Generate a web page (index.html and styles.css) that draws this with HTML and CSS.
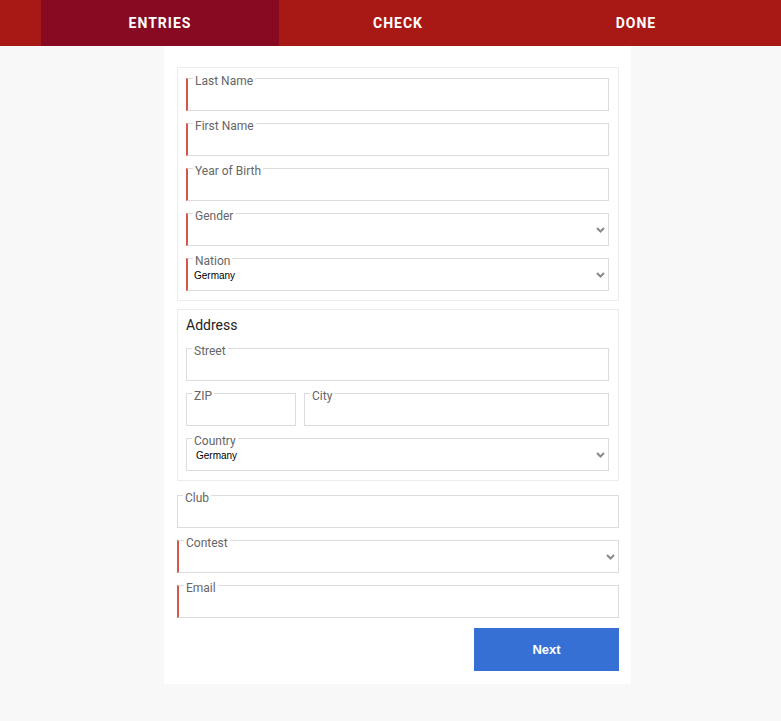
FILE: index.html
```html
<!DOCTYPE html>
<html lang="en">
<head>
<meta charset="utf-8">
<title>Entries</title>
<link rel="stylesheet" href="styles.css">
</head>
<body>
<header class="topbar">
  <nav class="tabs">
    <div class="tab active">ENTRIES</div>
    <div class="tab">CHECK</div>
    <div class="tab">DONE</div>
  </nav>
</header>
<main class="wrap">
  <form class="panel">
    <div class="group">
      <fieldset class="field req"><legend>Last Name</legend><input class="ctl" type="text"></fieldset>
      <fieldset class="field req"><legend>First Name</legend><input class="ctl" type="text"></fieldset>
      <fieldset class="field req"><legend>Year of Birth</legend><input class="ctl" type="text"></fieldset>
      <fieldset class="field req sel"><legend>Gender</legend><div class="ctl"></div><svg class="chev" width="9" height="6" viewBox="0 0 9 6"><path d="M1 1 L4.5 4.5 L8 1" fill="none" stroke="#8a8a8a" stroke-width="2"/></svg></fieldset>
      <fieldset class="field req sel"><legend>Nation</legend><div class="ctl">Germany</div><svg class="chev" width="9" height="6" viewBox="0 0 9 6"><path d="M1 1 L4.5 4.5 L8 1" fill="none" stroke="#8a8a8a" stroke-width="2"/></svg></fieldset>
    </div>
    <div class="group group2">
      <div class="group-title">Address</div>
      <fieldset class="field"><legend>Street</legend><input class="ctl" type="text"></fieldset>
      <div class="row">
        <fieldset class="field zip"><legend>ZIP</legend><input class="ctl" type="text"></fieldset>
        <fieldset class="field city"><legend>City</legend><input class="ctl" type="text"></fieldset>
      </div>
      <fieldset class="field sel"><legend>Country</legend><div class="ctl">Germany</div><svg class="chev" width="9" height="6" viewBox="0 0 9 6"><path d="M1 1 L4.5 4.5 L8 1" fill="none" stroke="#8a8a8a" stroke-width="2"/></svg></fieldset>
    </div>
    <div class="loose">
      <fieldset class="field"><legend>Club</legend><input class="ctl" type="text"></fieldset>
      <fieldset class="field req sel"><legend>Contest</legend><div class="ctl"></div><svg class="chev" width="9" height="6" viewBox="0 0 9 6"><path d="M1 1 L4.5 4.5 L8 1" fill="none" stroke="#8a8a8a" stroke-width="2"/></svg></fieldset>
      <fieldset class="field req"><legend>Email</legend><input class="ctl" type="text"></fieldset>
    </div>
    <div class="actions">
      <button type="button" class="next">Next</button>
    </div>
  </form>
</main>
</body>
</html>
```
FILE: styles.css
```css
html, body {
  margin: 0;
  padding: 0;
}
body {
  background: #f8f8f8;
  font-family: Roboto, "Noto Sans", sans-serif;
  min-height: 721px;
}
.topbar {
  background: #a81916;
  height: 46px;
}
.tabs {
  width: 714px;
  margin-left: 41px;
  display: grid;
  grid-template-columns: repeat(3, 1fr);
  height: 46px;
}
.tab {
  display: flex;
  align-items: center;
  justify-content: center;
  color: #fff;
  font-weight: 700;
  font-size: 14px;
  letter-spacing: 1px;
  padding-bottom: 1px;
}
.tab.active {
  background: #870a22;
}
.wrap {
  width: 714px;
  margin-left: 41px;
}
.panel {
  width: 467px;
  box-sizing: border-box;
  margin-left: 123px;
  background: #fff;
  padding: 21px 12px 13px 13px;
}
.group {
  border: 1px solid #ececec;
  padding: 1px 9px 9px 8px;
  display: flex;
  flex-direction: column;
  gap: 3px;
}
.group2 {
  margin-top: 8px;
  padding-top: 7px;
}
.group-title {
  font-size: 14px;
  line-height: 17px;
  color: #222;
  margin-bottom: 2px;
}
.row {
  display: flex;
  gap: 8px;
}
.zip {
  width: 110px;
  flex: none;
  box-sizing: border-box;
}
.city {
  flex: 1;
}
.loose {
  margin-top: 5px;
  display: flex;
  flex-direction: column;
  gap: 3px;
}
.field {
  margin: 0;
  min-width: 0;
  padding: 0 3px 0 5px;
  border: 1px solid #dcdcdc;
  display: flex;
  align-items: flex-start;
}
.field.req {
  border-left: 2px solid #d2574c;
}
.field legend {
  font-size: 12px;
  line-height: 12px;
  color: #666;
  padding: 6px 2px 0 2px;
}
.ctl {
  flex: 1;
  min-width: 0;
  display: block;
  box-sizing: border-box;
  height: 23px;
  border: 0;
  outline: none;
  background: transparent;
  font-family: "Liberation Sans", Arial, sans-serif;
  font-size: 10px;
  line-height: 14px;
  padding: 2px 0 7px 4px;
  margin: 0;
  color: #000;
}
.field.req .ctl {
  padding-left: 1px;
}
.chev {
  flex: none;
  margin-top: 5px;
  display: block;
}
.actions {
  display: flex;
  justify-content: flex-end;
  margin-top: 10px;
}
.next {
  width: 145px;
  height: 43px;
  border: 0;
  background: #3670d4;
  color: #fff;
  font-family: "Liberation Sans", Arial, sans-serif;
  font-weight: 700;
  font-size: 13px;
  cursor: pointer;
}
```
